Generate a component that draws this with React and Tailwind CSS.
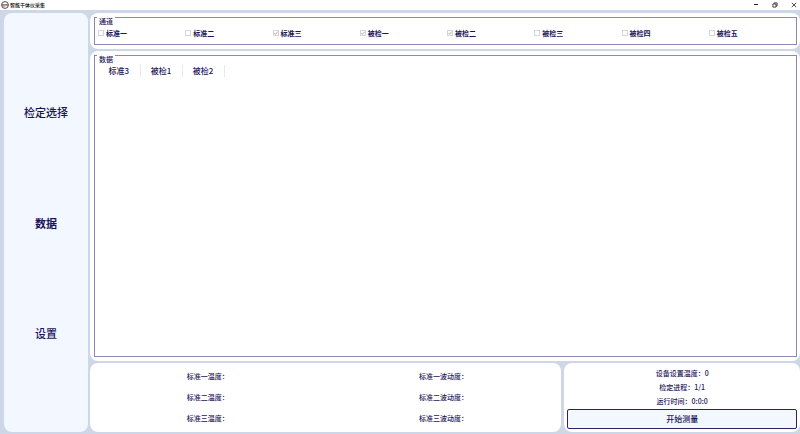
import { useState } from "react"

const navItems = ["检定选择", "数据", "设置"]

const channels = [
  { name: "标准一", on: false },
  { name: "标准二", on: false },
  { name: "标准三", on: true },
  { name: "被检一", on: true },
  { name: "被检二", on: true },
  { name: "被检三", on: false },
  { name: "被检四", on: false },
  { name: "被检五", on: false },
]

const columns = ["标准3", "被检1", "被检2"]

const readings = [
  "标准一温度：",
  "标准一波动度：",
  "标准二温度：",
  "标准二波动度：",
  "标准三温度：",
  "标准三波动度：",
]

const status = ["设备设置温度：0", "检定进程：1/1", "运行时间：0:0:0"]

function TitleBar() {
  return (
    <header className="flex h-[10px] items-center bg-white pl-px text-black">
      <svg viewBox="0 0 16 16" className="size-2 shrink-0" fill="none">
        <circle cx="8" cy="8" r="6.8" stroke="#3a3438" strokeWidth="1.8" />
        <path d="M3 9.5V7h2v2.5M6.5 9.5V7h3v2.5M11 9.5V7h2v2.5" stroke="#4a3a3e" strokeWidth="1.3" />
        <path d="M3 10.5h6" stroke="#d0505a" strokeWidth="1.4" />
      </svg>
      <h1 className="ml-px text-[5px] leading-[10px] font-medium">智能干体仪采集</h1>
      <div className="ml-auto flex items-center gap-[7px]">
        <button aria-label="最小化" className="flex h-[10px] w-3 items-center justify-center">
          <svg viewBox="0 0 6 6" className="size-[6px]" fill="none" stroke="#222">
            <path d="M1 2.5h4" />
          </svg>
        </button>
        <button aria-label="还原" className="flex h-[10px] w-3 items-center justify-center">
          <svg viewBox="0 0 6 6" className="size-[6px]" fill="none" stroke="#222" strokeWidth="0.8">
            <path d="M0.9 2h3.1v3.1H0.9zM2 2V0.9h3.1V4H4" />
          </svg>
        </button>
        <button aria-label="关闭" className="flex h-[10px] w-3 items-center justify-center">
          <svg viewBox="0 0 6 6" className="size-[6px]" fill="none" stroke="#222" strokeWidth="0.8">
            <path d="M0.8 0.8l4.4 4.4M5.2 0.8L0.8 5.2" />
          </svg>
        </button>
      </div>
    </header>
  )
}

function GroupBox({ title, className, children }) {
  return (
    <fieldset className={`relative min-w-0 border border-[#8c88b2] ${className}`}>
      <legend className="absolute -top-px left-[2px] bg-white px-[2px] text-[7px] leading-[9px] font-medium">
        {title}
      </legend>
      {children}
    </fieldset>
  )
}

function Channel({ name, on }) {
  return (
    <label className="flex items-center gap-[2px] text-[7px] leading-[10px] font-bold">
      <span className="grid size-[6px]">
        <input
          type="checkbox"
          defaultChecked={on}
          disabled
          className="peer col-start-1 row-start-1 size-[6px] appearance-none border border-[#d6d6d6] bg-white"
        />
        <svg
          viewBox="0 0 6 6"
          className="invisible col-start-1 row-start-1 size-[6px] peer-checked:visible"
          fill="none"
          stroke="#9a9a9a"
          strokeWidth="0.8"
        >
          <path d="M1.3 3.1l1.2 1.2 2.3-2.7" />
        </svg>
      </span>
      {name}
    </label>
  )
}

export default function App() {
  const [page, setPage] = useState("数据")

  return (
    <div className="flex min-h-screen flex-col bg-[#cdd7e7] font-['Noto_Sans_CJK_SC',sans-serif] text-[#1a1456]">
      <TitleBar />
      <div className="flex flex-1 gap-[2px] pt-[3px] pb-[2px] pl-1">
        {/* Sidebar */}
        <nav className="flex w-[84px] shrink-0 flex-col justify-evenly rounded-lg bg-[#f3f7ff]">
          {navItems.map((item) => (
            <button
              key={item}
              onClick={() => setPage(item)}
              className={`text-[11px] leading-6 ${page === item ? "font-bold" : "font-medium"}`}
            >
              {item}
            </button>
          ))}
        </nav>

        <main className="flex min-w-0 flex-1 flex-col gap-[2px]">
          {/* Channels */}
          <section className="rounded-lg bg-white py-1 pr-[3px] pl-1">
            <GroupBox title="通道" className="pt-[10px] pb-[6px] pl-[3px]">
              <div className="grid grid-cols-8">
                {channels.map((c) => (
                  <Channel key={c.name} name={c.name} on={c.on} />
                ))}
              </div>
            </GroupBox>
          </section>

          {/* Data */}
          <section className="flex flex-1 flex-col rounded-lg bg-white py-1 pr-[3px] pl-1">
            <GroupBox title="数据" className="flex-1 pt-[9px] pl-[3px]">
              <table className="border-collapse text-[8px] leading-3">
                <thead>
                  <tr>
                    {columns.map((c) => (
                      <th key={c} className="w-[42px] border-r border-[#e8e8ec] p-0 text-center font-medium">
                        {c}
                      </th>
                    ))}
                  </tr>
                </thead>
              </table>
            </GroupBox>
          </section>

          <div className="grid grid-cols-[2fr_1fr] gap-[3px]">
            {/* Temperatures */}
            <section className="grid grid-cols-2 rounded-lg bg-white py-[3px] text-[7px] font-medium">
              {readings.map((r) => (
                <p key={r} className="flex items-center justify-center">
                  {r}
                </p>
              ))}
            </section>

            {/* Run status */}
            <section className="rounded-lg bg-white p-[3px] text-center text-[7px] font-medium">
              {status.map((s) => (
                <p key={s} className="leading-[14px]">
                  {s}
                </p>
              ))}
              <button className="mt-px block w-full rounded-[2px] border border-[#2a2466] bg-[#f3f7ff] text-[8px] leading-[18px]">
                开始测量
              </button>
            </section>
          </div>
        </main>
      </div>
    </div>
  )
}
